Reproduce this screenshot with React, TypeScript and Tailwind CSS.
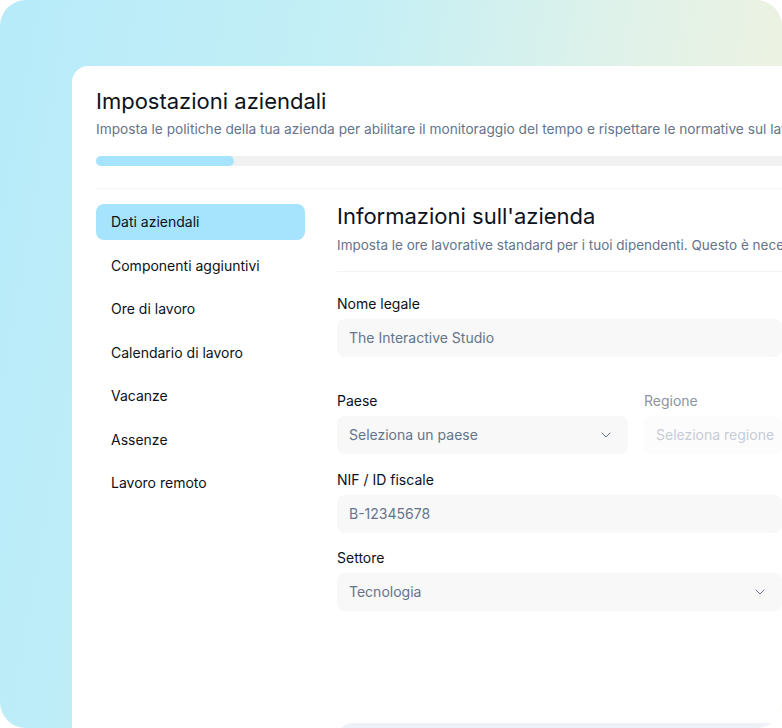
import { ChevronDown } from "lucide-react";

const sections = [
  "Dati aziendali",
  "Componenti aggiuntivi",
  "Ore di lavoro",
  "Calendario di lavoro",
  "Vacanze",
  "Assenze",
  "Lavoro remoto",
];

function Field({
  label,
  value,
  select,
  className,
}: {
  label: string;
  value: string;
  select?: boolean;
  className?: string;
}) {
  return (
    <div className={className}>
      <div className="text-sm leading-5 text-[#0b1220]">{label}</div>
      <div className="mt-[5px] flex h-[38px] items-center justify-between rounded-lg bg-[#f8f8f9] pl-3 pr-[14px]">
        <span className="text-sm text-[#64748b]">{value}</span>
        {select && <ChevronDown size={16} strokeWidth={1.5} className="text-[#64748b]" />}
      </div>
    </div>
  );
}

export default function App() {
  return (
    <div
      className="h-[728px] w-[782px] overflow-hidden rounded-[26px] bg-[linear-gradient(100deg,#b7ebfa_0%,#c4eff5_40%,#e0f2e9_70%,#f5f2dc_100%)] pl-[72px] pt-[66px]"
      style={{ fontFamily: "Inter, 'Noto Sans', sans-serif" }}
    >
      <div className="h-[700px] w-[1000px] rounded-tl-2xl bg-white pl-6 pt-[21px]">
        {/* HEADER */}
        <h1 className="text-[22px] leading-7 text-[#0b1220]">Impostazioni aziendali</h1>
        <p className="mt-1 whitespace-nowrap text-[13.7px] leading-5 text-[#64748b]">
          Imposta le politiche della tua azienda per abilitare il monitoraggio del tempo e rispettare le
          normative sul lavoro
        </p>
        <div className="mt-[17px] h-2.5 w-full rounded-full bg-[#f1f1f1]">
          <div className="h-2.5 w-[138px] rounded-full bg-[#a6e3fc]" />
        </div>
        <div className="mt-[22px] h-px w-full bg-[#f4f4f5]" />

        {/* BODY */}
        <div className="mt-[15px] flex gap-8">
          <nav className="flex w-[209px] flex-col gap-[7.5px]">
            {sections.map((s, i) => (
              <div
                key={s}
                className={
                  i === 0
                    ? "flex h-9 items-center rounded-lg bg-[#a6e3fc] pl-[15px] text-sm text-[#0b1220]"
                    : "flex h-9 items-center pl-[15px] text-sm text-[#0b1220]"
                }
              >
                {s}
              </div>
            ))}
          </nav>

          <div className="w-[445px]">
            <h2 className="text-[22px] leading-6 text-[#0b1220]">Informazioni sull'azienda</h2>
            <p className="mt-[7px] whitespace-nowrap text-[13.5px] leading-5 text-[#64748b]">
              Imposta le ore lavorative standard per i tuoi dipendenti. Questo è necessario per calcolare
            </p>
            <div className="mt-[16px] h-px w-[600px] bg-[#f4f4f5]" />

            <Field className="mt-[22px]" label="Nome legale" value="The Interactive Studio" />

            <div className="mt-[34px] flex gap-4">
              <Field className="w-[291px]" label="Paese" value="Seleziona un paese" select />
              <div className="flex-1">
                <div className="text-sm leading-5 text-[#8b95a3]">Regione</div>
                <div className="mt-[5px] flex h-[38px] items-center rounded-lg bg-[#fcfcfd] pl-3">
                  <span className="whitespace-nowrap text-sm text-[#c6ccd6]">Seleziona regione</span>
                </div>
              </div>
            </div>

            <Field className="mt-4" label="NIF / ID fiscale" value="B-12345678" />
            <Field className="mt-[15px]" label="Settore" value="Tecnologia" select />

            <div className="mt-[112px] h-10 rounded-2xl bg-[#eef2f8]" />
          </div>
        </div>
      </div>
    </div>
  );
}
